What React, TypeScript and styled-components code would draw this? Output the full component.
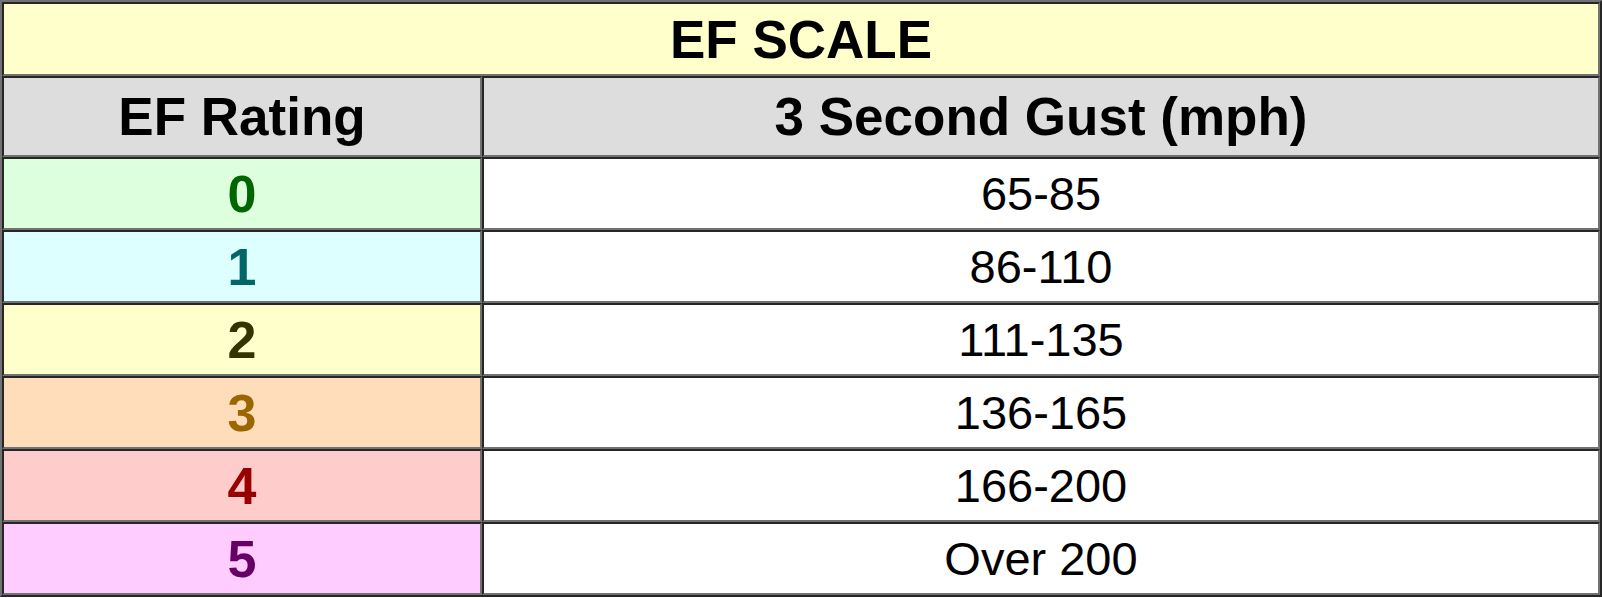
import styled, { createGlobalStyle } from "styled-components";

const GlobalStyle = createGlobalStyle`
  html, body {
    margin: 0;
    padding: 0;
    background: #ffffff;
  }
  body {
    font-family: "Liberation Sans", Arial, sans-serif;
  }
`;

const ScaleTable = styled.table`
  width: 1602px;
  border-collapse: separate;
  border-spacing: 0;
  border: 2px solid;
  border-color: #727272 #262626 #262626 #727272;
  table-layout: fixed;
`;

const Cell = styled.td<{ $bg?: string; $color?: string; $bold?: boolean }>`
  box-sizing: border-box;
  border: 2px solid;
  border-color: #262626 #727272 #727272 #262626;
  padding: 0;
  text-align: center;
  vertical-align: middle;
  background: ${(p) => p.$bg || "#ffffff"};
  color: ${(p) => p.$color || "#000000"};
  font-size: ${(p) => (p.$bold ? "52px" : "47px")};
  font-weight: ${(p) => (p.$bold ? 700 : 400)};
`;

const HeadCell = styled(Cell)`
  font-size: 53px;
  font-weight: 700;
`;

const TitleRow = styled.tr`
  height: 74px;
`;

const HeaderRow = styled.tr`
  height: 81px;
`;

const DataRow = styled.tr`
  height: 73px;
`;

type Rating = { ef: string; gust: string; bg: string; color: string };

const ratings: Rating[] = [
  { ef: "0", gust: "65-85", bg: "#ddffdd", color: "#006600" },
  { ef: "1", gust: "86-110", bg: "#ddffff", color: "#006666" },
  { ef: "2", gust: "111-135", bg: "#ffffcc", color: "#333300" },
  { ef: "3", gust: "136-165", bg: "#ffddbb", color: "#996600" },
  { ef: "4", gust: "166-200", bg: "#ffcccc", color: "#990000" },
  { ef: "5", gust: "Over 200", bg: "#ffccff", color: "#660066" },
];

function App() {
  return (
    <>
      <GlobalStyle />
      <ScaleTable>
        <colgroup>
          <col style={{ width: 480 }} />
          <col />
        </colgroup>
        <tbody>
          <TitleRow>
            <HeadCell colSpan={2} $bg="#ffffcc">
              EF SCALE
            </HeadCell>
          </TitleRow>
          <HeaderRow>
            <HeadCell $bg="#dddddd">EF Rating</HeadCell>
            <HeadCell $bg="#dddddd">3 Second Gust (mph)</HeadCell>
          </HeaderRow>
          {ratings.map((r) => (
            <DataRow key={r.ef}>
              <Cell $bg={r.bg} $color={r.color} $bold>
                {r.ef}
              </Cell>
              <Cell>{r.gust}</Cell>
            </DataRow>
          ))}
        </tbody>
      </ScaleTable>
    </>
  );
}

export default App;
